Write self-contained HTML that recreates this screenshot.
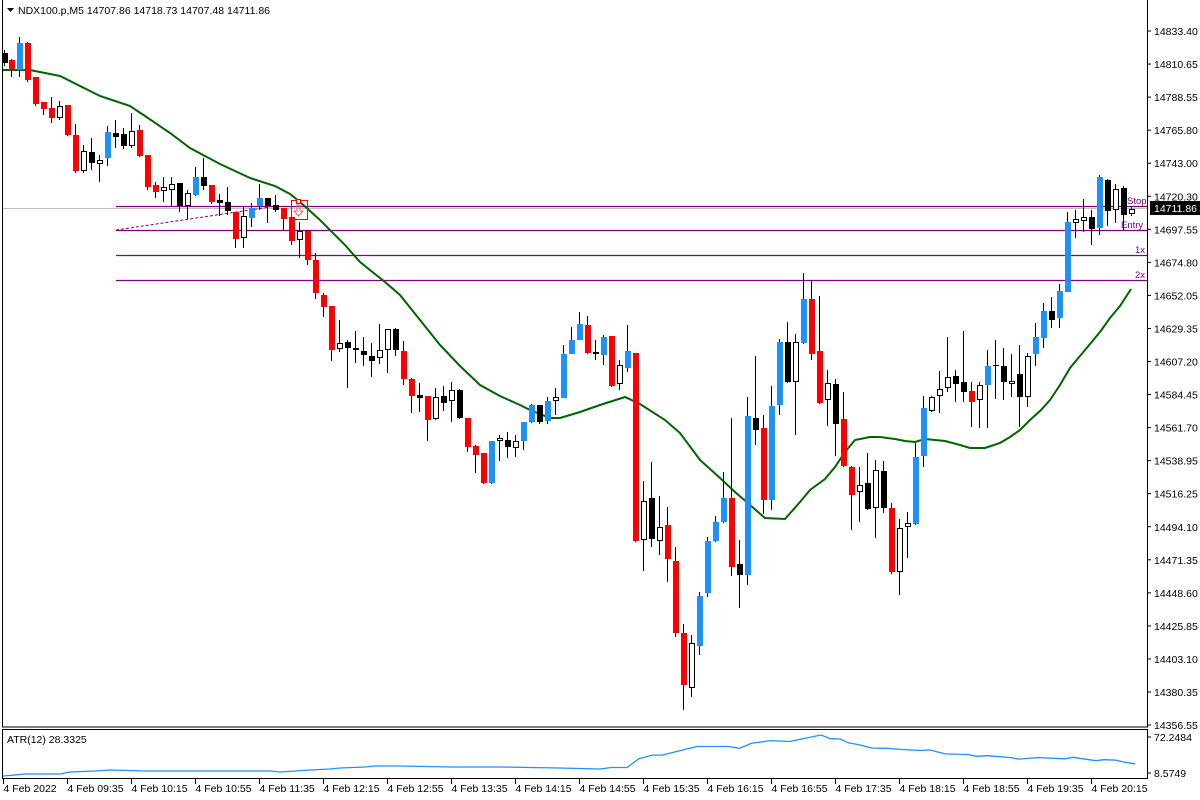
<!DOCTYPE html>
<html><head><meta charset="utf-8">
<style>
html,body{margin:0;padding:0;background:#fff;width:1200px;height:800px;overflow:hidden}
svg{display:block}
text{font-family:"Liberation Sans",sans-serif;font-size:10.5px;fill:#000}
</style></head><body>
<svg id="s" width="1200" height="800" xmlns="http://www.w3.org/2000/svg"></svg>
<script>
var S=document.getElementById('s');var o='';
o+='<rect x="2.5" y="-1" width="1145" height="728" fill="none" stroke="#000"/>';
o+='<rect x="2.5" y="729.5" width="1145" height="49" fill="none" stroke="#000"/>';
o+='<line x1="3" y1="208.5" x2="1147" y2="208.5" stroke="#c0c0c0"/>';
[[206.5],[230.5],[255.5],[280.5]].forEach(function(a){o+='<line x1="116" y1="'+a[0]+'" x2="1147" y2="'+a[0]+'" stroke="#800080" stroke-width="1.3"/>';});
o+='<line x1="116" y1="230" x2="270" y2="207" stroke="#800080" stroke-dasharray="3,2"/>';
o+='<text x="1127" y="204" style="fill:#800080;font-size:9.5px">Stop</text>';
o+='<text x="1121" y="228" style="fill:#800080;font-size:9.5px">Entry</text>';
o+='<text x="1135" y="253" style="fill:#800080;font-size:9.5px">1x</text>';
o+='<text x="1135" y="278" style="fill:#800080;font-size:9.5px">2x</text>';
var ma=[[3,70],[30,70],[60,76],[100,96],[130,106],[145,116],[170,133],[190,148],[220,164],[250,178],[275,186],[290,194],[300,202],[320,220],[345,245],[360,262],[385,282],[400,295],[420,320],[440,345],[460,366],[480,385],[500,396],[520,405],[530,410],[550,418],[560,418],[580,412],[600,405],[625,397],[640,404],[665,420],[680,433],[700,460],[720,478],[735,492],[750,505],[765,518],[785,519],[800,502],[810,490],[825,479],[835,467],[845,452],[855,440],[870,437],[880,437],[895,439],[905,441],[915,442],[925,439],[945,441],[960,445],[970,448],[985,448],[1000,443],[1010,437],[1020,430],[1030,420],[1040,411],[1050,400],[1060,385],[1070,368],[1080,356],[1090,344],[1100,332],[1110,318],[1120,306],[1131,289]];
o+='<polyline fill="none" stroke="#006400" stroke-width="2" points="'+ma.map(function(p){return p.join(',')}).join(' ')+'"/>';
var C=[[4,50,53,63,66,'k'],[11,59,60,70,77,'r'],[19,37,43,70,77,'b'],[27,42,43,80,82,'r'],[35,77,77,104,106,'r'],[43,102,102,109,115,'r'],[51,97,108,118,123,'r'],[59,101,106,118,120,'w'],[67,105,105,135,136,'r'],[75,124,135,171,173,'r'],[83,145,151,171,173,'w'],[91,138,152,163,170,'k'],[99,155,160,164,182,'w'],[107,126,132,158,166,'b'],[115,120,133,137,148,'k'],[123,128,134,146,149,'k'],[131,113,131,146,148,'w'],[139,125,130,156,157,'r'],[147,155,155,187,190,'r'],[155,182,185,192,198,'r'],[163,177,187,191,202,'w'],[171,177,184,190,207,'w'],[179,183,183,206,212,'k'],[187,190,193,206,219,'w'],[195,167,177,195,196,'b'],[203,158,177,186,190,'k'],[211,185,185,202,204,'r'],[219,194,200,203,216,'k'],[227,187,202,211,215,'k'],[235,212,212,239,248,'r'],[243,207,216,238,248,'w'],[251,203,208,218,227,'b'],[259,184,198,206,210,'b'],[267,198,198,206,223,'k'],[275,195,205,210,212,'k'],[283,208,208,219,231,'r'],[291,217,217,241,245,'r'],[299,222,231,240,258,'w'],[307,230,231,260,265,'r'],[315,253,260,293,299,'r'],[323,293,295,307,317,'r'],[331,306,306,350,361,'r'],[339,320,343,349,352,'w'],[347,340,342,348,388,'k'],[355,331,348,350,363,'k'],[363,337,351,355,366,'k'],[371,343,356,361,377,'k'],[379,324,350,358,364,'w'],[387,329,329,350,373,'w'],[395,328,329,350,356,'k'],[403,341,351,379,385,'r'],[411,378,379,396,413,'r'],[419,383,395,398,412,'k'],[427,396,396,420,441,'r'],[435,388,397,419,420,'w'],[443,386,396,403,411,'k'],[451,382,390,401,422,'w'],[459,389,390,418,419,'k'],[467,418,418,447,452,'r'],[475,445,446,455,473,'r'],[483,453,453,483,484,'r'],[491,441,441,483,484,'b'],[499,435,438,441,461,'w'],[507,432,440,447,458,'k'],[515,435,441,448,457,'w'],[523,422,422,441,450,'b'],[531,404,405,422,423,'b'],[539,405,405,422,424,'k'],[547,397,401,421,424,'b'],[555,388,397,401,415,'w'],[563,345,354,398,398,'b'],[571,327,340,354,354,'b'],[579,312,324,340,340,'b'],[587,316,325,353,354,'r'],[595,340,352,354,360,'k'],[603,335,337,355,365,'b'],[611,336,336,386,387,'r'],[619,360,365,384,390,'w'],[627,325,351,368,372,'b'],[635,353,353,541,542,'r'],[643,481,501,540,571,'w'],[651,462,498,539,547,'k'],[659,496,527,541,555,'w'],[667,507,525,559,582,'r'],[675,547,561,633,637,'r'],[683,624,633,685,710,'r'],[691,635,643,688,697,'w'],[699,592,596,646,655,'b'],[707,537,541,593,597,'b'],[715,516,522,541,542,'b'],[723,472,498,522,523,'b'],[731,418,498,567,576,'r'],[739,540,564,575,608,'k'],[747,397,416,575,585,'b'],[755,356,418,430,445,'k'],[763,415,428,500,514,'r'],[771,386,406,500,510,'b'],[779,339,342,405,415,'b'],[787,322,342,382,383,'k'],[795,334,342,382,435,'w'],[803,273,299,343,344,'b'],[811,280,299,354,360,'r'],[819,296,351,403,404,'r'],[827,370,383,400,426,'w'],[835,379,384,424,456,'k'],[843,392,419,466,467,'r'],[851,466,467,495,530,'r'],[859,467,485,492,522,'w'],[867,453,483,509,510,'k'],[875,460,470,508,538,'w'],[883,461,471,508,513,'k'],[891,503,508,572,574,'r'],[899,519,528,572,595,'w'],[907,512,523,527,558,'w'],[915,443,457,524,525,'b'],[923,396,408,456,467,'b'],[931,396,397,411,412,'w'],[939,371,389,396,413,'w'],[947,337,377,388,392,'w'],[955,370,376,384,402,'k'],[963,331,382,392,402,'k'],[971,382,391,402,427,'r'],[979,382,385,400,428,'w'],[987,350,366,385,428,'b'],[995,340,365,366,399,'k'],[1003,348,366,382,400,'k'],[1011,354,381,384,397,'w'],[1019,345,374,397,427,'k'],[1027,353,356,397,407,'w'],[1035,323,337,354,366,'b'],[1043,303,311,338,348,'b'],[1051,297,311,320,328,'k'],[1059,284,291,318,328,'b'],[1067,212,222,292,292,'b'],[1075,210,219,223,238,'w'],[1083,199,217,221,232,'w'],[1091,210,217,229,245,'k'],[1099,175,177,228,235,'b'],[1107,179,180,211,226,'k'],[1115,184,189,210,223,'w'],[1123,186,188,215,230,'k'],[1131,206,209,214,216,'w']];
var col={r:'#ff0000',b:'#1e90ff',k:'#000',w:'#fff'};
C.forEach(function(c){var x=c[0];
o+='<line x1="'+(x+.5)+'" y1="'+c[1]+'" x2="'+(x+.5)+'" y2="'+c[4]+'" stroke="#000"/>';
var h=Math.max(c[3]-c[2],1);
if(c[5]=='w')o+='<rect x="'+(x-1.5)+'" y="'+(c[2]+.5)+'" width="5" height="'+Math.max(h-1,1)+'" fill="#fff" stroke="#000"/>';
else o+='<rect x="'+(x-2)+'" y="'+c[2]+'" width="6" height="'+h+'" fill="'+col[c[5]]+'"/>';
});
o+='<rect x="291.5" y="200.5" width="16" height="19" fill="none" stroke="#ff0000"/>';
o+='<rect x="296.5" y="199.5" width="4" height="4" fill="#fff" stroke="#ff0000"/>';
o+='<path d="M297 205v6h-3l4.5 5 4.5-5h-3v-6z" fill="none" stroke="#ff6060"/>';
o+='<path d="M7 8h7l-3.5 4z" fill="#000"/>';
o+='<text x="18" y="14">NDX100.p,M5  14707.86 14718.73 14707.48 14711.86</text>';
var pv=['14833.40','14810.65','14788.55','14765.80','14743.00','14720.30','14697.55','14674.80','14652.05','14629.35','14607.20','14584.45','14561.70','14538.95','14516.25','14494.10','14471.35','14448.60','14425.85','14403.10','14380.35','14356.55'];
pv.forEach(function(v,i){var y=31+i*33.05;o+='<line x1="1147" y1="'+y+'" x2="1151" y2="'+y+'" stroke="#000"/>';o+='<text x="1154" y="'+(y+4)+'">'+v+'</text>';});
o+='<rect x="1150" y="201" width="50" height="14" fill="#000"/><text x="1154" y="212" style="fill:#fff">14711.86</text>';
o+='<text x="7" y="743">ATR(12) 28.3325</text>';
o+='<line x1="1147" y1="737" x2="1151" y2="737" stroke="#000"/><text x="1154" y="741">72.2484</text>';
o+='<line x1="1147" y1="773" x2="1151" y2="773" stroke="#000"/><text x="1154" y="777">8.5749</text>';
var z=[[0,135],[30,130],[70,130],[100,102],[135,90],[160,90],[250,62],[330,62],[360,68],[390,52],[440,43],[490,46],[520,38],[570,25],[595,37],[620,38],[640,50],[670,57],[700,67],[740,68],[780,72],[830,75],[850,73],[890,86],[950,88],[970,94],[1000,92],[1060,98],[1080,103],[1130,98],[1200,102],[1220,97],[1280,108],[1300,105],[1330,106],[1350,112],[1380,118]];
var at=[[3,776],[15,775],[25,774],[60,774],[70,772],[95,771],[110,770],[145,771],[170,771],[270,771],[280,772],[295,771],[310,770],[330,769],[340,768],[365,767],[375,766],[400,766],[450,767],[500,767],[560,768]];
z.forEach(function(p){at.push([600+p[0]/2.58,727.3+0.309*p[1]]);});
o+='<polyline fill="none" stroke="#1e90ff" stroke-width="1.3" points="'+at.map(function(p){return p[0].toFixed(1)+','+p[1].toFixed(1)}).join(' ')+'"/>';
var tl=['4 Feb 2022','4 Feb 09:35','4 Feb 10:15','4 Feb 10:55','4 Feb 11:35','4 Feb 12:15','4 Feb 12:55','4 Feb 13:35','4 Feb 14:15','4 Feb 14:55','4 Feb 15:35','4 Feb 16:15','4 Feb 16:55','4 Feb 17:35','4 Feb 18:15','4 Feb 18:55','4 Feb 19:35','4 Feb 20:15'];
tl.forEach(function(t,i){var x=3+i*64;o+='<line x1="'+(x+.5)+'" y1="779" x2="'+(x+.5)+'" y2="784" stroke="#000"/>';o+='<text x="'+(x+.5)+'" y="792">'+t+'</text>';});
S.innerHTML=o;
</script>
</body></html>
